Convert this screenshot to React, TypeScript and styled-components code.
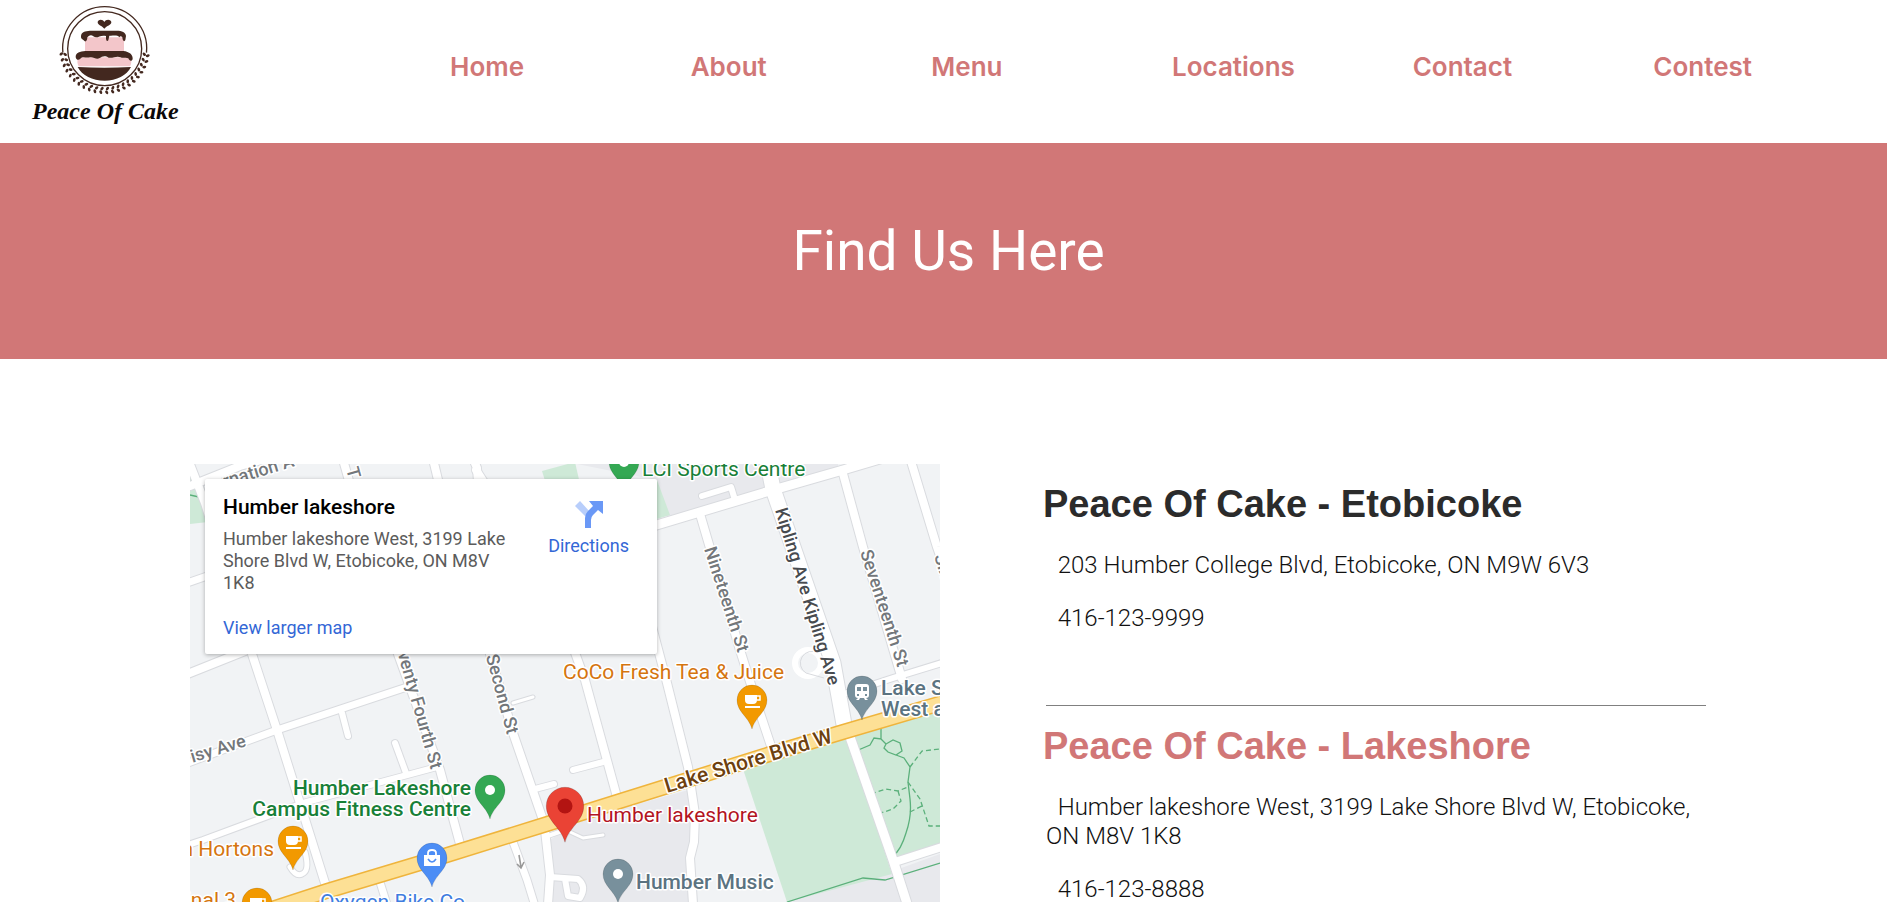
import React from 'react';
import styled, { createGlobalStyle } from 'styled-components';

const rose = '#d17777';

const GlobalStyle = createGlobalStyle`
  *, *::before, *::after { box-sizing: border-box; }
  body { margin: 0; background: #fff; font-family: Roboto, sans-serif; color: #222; }
`;

const Page = styled.div`
  height: 100vh;
  overflow-y: auto;
  scrollbar-width: none;
`;

const Header = styled.header`
  display: flex;
  align-items: center;
  height: 143px;
`;

const LogoLink = styled.a`
  flex: none;
  width: 220px;
  height: 143px;
  svg { display: block; }
`;

const Nav = styled.nav`
  flex: 1;
  display: grid;
  grid-template-columns: repeat(5, 1fr) auto;
  padding: 0 135px 10px 230px;
`;

const NavLink = styled.a`
  font: 600 26px/32px Inter, sans-serif;
  color: ${rose};
  text-decoration: none;
`;

const Banner = styled.section`
  display: flex;
  justify-content: center;
  align-items: center;
  height: 216px;
  padding-left: 10px;
  background: ${rose};
`;

const BannerTitle = styled.h1`
  margin: 0;
  font: 400 55px/68px Roboto, sans-serif;
  color: #fff;
`;

const Content = styled.main`
  display: grid;
  grid-template-columns: 75fr 66fr;
  column-gap: 106px;
  align-items: start;
  padding: 105px 181px 0 190px;
`;

const MapFrame = styled.section`
  position: relative;
  height: 450px;
  overflow: hidden;
  background: #f1f3f5;
`;

const MapSvg = styled.svg`
  display: block;
  width: 100%;
  height: 100%;
  font-family: Roboto, sans-serif;
`;

const InfoCard = styled.div`
  position: absolute;
  top: 15px;
  left: 15px;
  display: flex;
  justify-content: space-between;
  width: 452px;
  height: 175px;
  padding: 16px 28px 12px 18px;
  background: #fff;
  border-radius: 2px;
  box-shadow: 0 1px 4px rgba(0, 0, 0, 0.3);
`;

const Place = styled.div`
  display: flex;
  flex-direction: column;
  align-items: flex-start;
  width: 290px;
`;

const PlaceName = styled.h2`
  margin: 0 0 9px;
  font: 500 21px/24px Roboto, sans-serif;
  color: #000;
`;

const PlaceAddress = styled.p`
  margin: 0 0 23px;
  font-size: 18px;
  line-height: 22px;
  color: #5b5b5b;
`;

const MapLink = styled.a`
  font-size: 18px;
  line-height: 22px;
  color: #3367d6;
  text-decoration: none;
`;

const Directions = styled(MapLink)`
  display: flex;
  flex-direction: column;
  align-items: center;
  gap: 7px;
  padding-top: 5px;
`;

const Store = styled.section`
  & + & { border-top: 1px solid #808080; }
`;

const StoreName = styled.h2<{ $active?: boolean }>`
  margin: 0 0 25px -3px;
  padding-top: 18px;
  font: 700 38px/44px "Liberation Sans", Arial, sans-serif;
  color: ${(p) => (p.$active ? rose : '#2b2b2b')};
`;

const StoreLine = styled.p`
  margin: 0 0 24px;
  font-size: 24px;
  font-weight: 300;
  line-height: 29px;
  color: #111;
`;

const Stores = styled.div`
  display: flex;
  flex-direction: column;
`;

const FirstStore = styled.div`
  padding-bottom: 48px;
`;

const leafAngles = Array.from({ length: 22 }, (_, i) => 8 + i * 7.8);

function Logo() {
  const brown = '#43281f';
  return (
    <svg width="220" height="143" viewBox="0 0 660 429" role="img" aria-label="Peace Of Cake">
      <g fill="none" stroke={brown}>
        <path d="M188.6 158 A126 126 0 1 1 439.4 158" strokeWidth="4" />
        <circle cx="314" cy="146" r="111" strokeWidth="4" />
      </g>
      <g fill={brown}>
        {leafAngles.map((a) => (
          <g key={a} transform={`translate(314 146) rotate(${a})`}>
            <ellipse cx="120" cy="0" rx="6" ry="4" transform="rotate(40 120 0)" />
            <ellipse cx="131" cy="3" rx="6" ry="4" transform="rotate(-30 131 3)" />
          </g>
        ))}
      </g>
      <path d="M313 86 C306 78 293 75 293 67 C293 58 308 56 313 66 C318 56 334 58 334 67 C334 75 320 78 313 86Z" fill={brown} />
      <path d="M255 112 H372 V154 H255Z" fill="#f3c6ca" />
      <path d="M243 108 C244 96 255 93 270 92 H350 C366 92 377 97 378 108 L376 120 C374 126 368 125 367 112 C363 107 360 109 358 112 C352 104 340 108 328 107 L325 121 C321 126 317 122 318 108 C300 103 292 118 280 109 C272 101 265 109 262 112 C262 125 255 127 251 121 C245 117 242 114 243 108Z" fill={brown} />
      <path d="M234 172 H393 C395 184 394 192 390 199 H236 C232 192 231 184 234 172Z" fill="#f3c6ca" />
      <path d="M227 171 C227 158 240 154 256 153 H370 C388 155 399 164 398 177 C396 185 388 184 385 175 C377 170 369 176 362 172 C350 166 338 176 326 173 C315 165 306 169 299 174 C289 180 281 170 270 172 C258 175 248 168 241 176 C236 182 228 180 227 171Z" fill={brown} />
      <path d="M233 201 C286 204 341 204 393 201 C380 226 350 242 314 242 C277 242 246 226 233 201Z" fill={brown} />
      <text x="316" y="357" textAnchor="middle" fontFamily='"Liberation Serif", serif' fontSize="72" fontWeight="700" fontStyle="italic" fill="#0b0808">
        Peace Of Cake
      </text>
    </svg>
  );
}

const roads: { d: string; w: number }[] = [
  { d: 'M-4 -10 L15 39 L62 190 L87 266 L135 419', w: 8 },
  { d: 'M152 -8 L208 190 L250 306 L270 380', w: 8 },
  { d: 'M243 -5 L249 20', w: 8 },
  { d: 'M282 -8 L287 4 L300 190 L323 269 L353 356', w: 8 },
  { d: 'M295 20 L286 6', w: 8 },
  { d: 'M0 22 L50 2 L120 -18', w: 8 },
  { d: 'M0 118 L20 111', w: 7 },
  { d: 'M-5 211 L55 187', w: 8 },
  { d: 'M-5 300 L87 266 L217 223', w: 7 },
  { d: 'M152 249 L158 272', w: 6 },
  { d: 'M205 279 L216 309', w: 6 },
  { d: 'M-5 382 L13 376 L113 339 L247 303', w: 6 },
  { d: 'M100 403 Q106 413 112 410 Q120 407 115 388', w: 5 },
  { d: 'M189 415 L200 450', w: 7 },
  { d: 'M323 378 L337 416 L349 455', w: 7 },
  { d: 'M355 366 L360 411 L357 455', w: 8 },
  { d: 'M360 413 L388 415 Q397 422 390 434 L378 432 L375 415', w: 6 },
  { d: 'M345 325 L364 320', w: 6 },
  { d: 'M323 239 L343 233', w: 3 },
  { d: 'M355 373 L372 367', w: 4 },
  { d: 'M380 368 L393 374 L413 371', w: 3 },
  { d: 'M383 306 L417 297', w: 6 },
  { d: 'M380 175 L395 216 L427 333', w: 8 },
  { d: 'M460 155 L477 219 L498 303 L505 350 L504 378 L500 394 L504 455', w: 8 },
  { d: 'M460 63 L573 29 L653 6 L720 -14', w: 9 },
  { d: 'M512 32 L541 23 L545 36', w: 6 },
  { d: 'M510 50 L550 186 L570 249 L581 282', w: 8 },
  { d: 'M652 6 L673 83 L712 215', w: 8 },
  { d: 'M720 -6 L747 83 L760 120', w: 8 },
  { d: 'M654 230 L703 214 L755 198', w: 6 },
  { d: 'M577 -5 L583 25 L643 199 L655 266', w: 15 },
  { d: 'M660 273 L703 396 L722 455', w: 9 },
  { d: 'M705 398 L755 382', w: 8 },
];

const highway = 'M60 452 L137 427 L257 391 L357 360 L427 338 L580 290 L653 268 L755 238';

type PinProps = { x: number; y: number; color: string; scale?: number; children?: React.ReactNode };

function Pin({ x, y, color, scale = 1, children }: PinProps) {
  return (
    <g transform={`translate(${x} ${y}) scale(${scale})`}>
      <path d="M0 29 C-3 17 -15 12 -15 0 A15 15 0 0 1 15 0 C15 12 3 17 0 29Z" fill={color} stroke="rgba(0,0,0,0.2)" strokeWidth="0.6" />
      {children}
    </g>
  );
}

const Dot = () => <circle r="5" fill="#fff" />;

const Cup = () => (
  <g>
    <path d="M-7 -5 H5 V0 Q5 4 1 4 H-3 Q-7 4 -7 0Z M-7 6 H8 V8 H-7Z" fill="#fff" />
    <path d="M5 -4 H8 V0 H5" fill="none" stroke="#fff" strokeWidth="1.5" />
  </g>
);

const Label = styled.text<{ $strong?: boolean; $size?: number }>`
  font-size: ${(p) => p.$size ?? 21}px;
  font-weight: ${(p) => (p.$strong ? 500 : 400)};
  paint-order: stroke;
  stroke: #fff;
  stroke-width: 3px;
  stroke-linejoin: round;
`;

function MapDrawing() {
  const street = '#73777b';
  return (
    <MapSvg viewBox="0 0 750 450" preserveAspectRatio="xMidYMid slice" role="img" aria-label="Map of Humber lakeshore">
      <rect width="750" height="450" fill="#f1f3f5" />
      <g fill="#e8e9ed">
        <path d="M387 0 H648 V8 L478 55 L467 16Z" />
        <path d="M360 376 L390 356 L502 325 V385 L498 450 H360Z" />
        <path d="M596 437 L703 407 L750 390 V450 H600Z" />
      </g>
      <g fill="#cee9d7">
        <path d="M553 305 L657 272 L702 410 L597 438Z" />
        <path d="M663 268 L750 243 V380 L704 394Z" />
        <path d="M0 13 L18 58 L0 60Z" />
        <path d="M352 7 L385 -2 L390 20 H356Z" />
        <path d="M467 16 L480 51 L467 55Z" />
      </g>
      <g fill="none" stroke="#5bb07b" strokeWidth="1.3">
        <path d="M597 438 L673 414 L695 416 L750 399" />
        <path d="M666 287 L680 281 L684 274 L691 275 V262 M691 275 L696 280 M696 280 L703 276 L710 279 L712 287 L706 291 L698 288 L694 284Z M706 291 L714 294 L720 303 L718 318 L720 335 Q722 352 716 369 Q711 386 703 392" />
        <path d="M720 303 L732 287 L750 285 M681 330 L696 325 L708 327 L718 323 M708 327 L711 337 L703 345 L688 350 M718 318 L730 335 L739 362 L750 362 M720 348 L732 342" strokeDasharray="5 3" />
        <path d="M0 31 L9 33" />
      </g>
      <g fill="none">
        <circle cx="618" cy="199" r="13" stroke="#fff" strokeWidth="6" />
        <path d="M628 189 A10 10 0 1 0 616 209 L634 214" stroke="#d9dbdf" strokeWidth="1" />
      </g>
      <g fill="none" stroke="#d9dbdf" strokeLinecap="round" strokeLinejoin="round">
        {roads.map((r) => <path key={r.d} d={r.d} strokeWidth={r.w + 2} />)}
      </g>
      <g fill="none" stroke="#fff" strokeLinecap="round" strokeLinejoin="round">
        {roads.map((r) => <path key={r.d} d={r.d} strokeWidth={r.w} />)}
      </g>
      <g fill="none">
        <path d={highway} stroke="#efb43c" strokeWidth="16" />
        <path d={highway} stroke="#fde095" strokeWidth="13" />
      </g>
      <path d="M329 391 L331 403 M327 400 L331 404 L334 398" fill="none" stroke="#999" strokeWidth="1.6" />

      <Label $size={18} $strong fill={street} transform="translate(20 28) rotate(-17)">ternation A</Label>
      <Label $size={18} $strong fill={street} transform="translate(156 5) rotate(74)">T</Label>
      <Label $size={18} $strong fill={street} transform="translate(514 85) rotate(72)">Nineteenth St</Label>
      <Label $size={18} $strong fill="#484b4f" transform="translate(585 46) rotate(73)">Kipling Ave Kipling Ave</Label>
      <Label $size={18} $strong fill={street} transform="translate(670 88) rotate(72)">Seventeenth St</Label>
      <Label $size={18} $strong fill={street} transform="translate(744 92) rotate(72)">Six</Label>
      <Label $size={18} $strong fill={street} textAnchor="end" transform="translate(241 306) rotate(74)">Twenty Fourth St</Label>
      <Label $size={18} $strong fill={street} textAnchor="end" transform="translate(317 271) rotate(75)">Second St</Label>
      <Label $size={18} $strong fill={street} textAnchor="end" transform="translate(57 282) rotate(-17)">isy Ave</Label>
      <Label $strong fill="#6d400e" transform="translate(477 329) rotate(-17)">Lake Shore Blvd W</Label>

      <Label fill="#188038" x="452" y="12">LCI Sports Centre</Label>
      <Label fill="#d5750f" x="373" y="215">CoCo Fresh Tea &amp; Juice</Label>
      <Label $strong fill="#188038" x="281" y="331" textAnchor="end">Humber Lakeshore</Label>
      <Label $strong fill="#188038" x="281" y="352" textAnchor="end">Campus Fitness Centre</Label>
      <Label fill="#d5750f" x="84" y="392" textAnchor="end">n Hortons</Label>
      <Label fill="#d5750f" x="46" y="443" textAnchor="end">inal 3</Label>
      <Label fill="#3f7de0" x="130" y="445">Oxygen Bike Co</Label>
      <Label fill="#b31422" x="397" y="358">Humber lakeshore</Label>
      <Label $strong fill="#5b7381" x="446" y="425">Humber Music</Label>
      <Label $strong fill="#5b7381" x="691" y="231">Lake S</Label>
      <Label $strong fill="#5b7381" x="691" y="252">West a</Label>

      <Pin x={434} y={-2} color="#34a853"><Dot /></Pin>
      <Pin x={300} y={326} color="#34a853"><Dot /></Pin>
      <Pin x={103} y={377} color="#f29900"><Cup /></Pin>
      <Pin x={67} y={439} color="#f29900"><Cup /></Pin>
      <Pin x={562} y={236} color="#f29900"><Cup /></Pin>
      <Pin x={242} y={394} color="#4c8df5">
        <path d="M-8 -3 H8 V8 H-8Z" fill="#fff" />
        <path d="M-4 -3 V-5 Q-4 -8 0 -8 Q4 -8 4 -5 V-3" fill="none" stroke="#fff" strokeWidth="1.8" />
        <path d="M-4 1 Q0 7 4 1" fill="none" stroke="#4c8df5" strokeWidth="1.6" />
      </Pin>
      <Pin x={428} y={410} color="#78909c"><Dot /></Pin>
      <Pin x={672} y={227} color="#78909c">
        <path d="M-7 -4 Q-7 -7 -4 -7 H4 Q7 -7 7 -4 V4 Q7 7 4 7 L6 9 H-6 L-4 7 Q-7 7 -7 4Z" fill="#fff" />
        <path d="M-5 -4 H-1 V0 H-5Z M1 -4 H5 V0 H1Z M-5 3 H-3 V5 H-5Z M3 3 H5 V5 H3Z M-3 9 L-2 7 H2 L3 9Z" fill="#78909c" />
      </Pin>
      <Pin x={375} y={342} color="#ea4335" scale={1.25}><circle r="6" fill="#b31412" /></Pin>
    </MapSvg>
  );
}

function DirectionsIcon() {
  return (
    <svg width="28" height="28" viewBox="0 0 28 28" aria-hidden="true">
      <path d="M5 1 L0 6 L11 17 L15 12Z" fill="#b8cefb" />
      <path d="M10 28 V18 Q10 14 13 11 L18 6 L14 1 H28 V14 L23 10 L18 15 Q16 17 16 20 V28Z" fill="#6a98f6" />
    </svg>
  );
}

const links = ['Home', 'About', 'Menu', 'Locations', 'Contact', 'Contest'];

export default function App() {
  return (
    <Page>
      <GlobalStyle />
      <Header>
        <LogoLink href="#"><Logo /></LogoLink>
        <Nav>
          {links.map((l) => <NavLink key={l} href={`#${l.toLowerCase()}`}>{l}</NavLink>)}
        </Nav>
      </Header>
      <Banner>
        <BannerTitle>Find Us Here</BannerTitle>
      </Banner>
      <Content>
        <MapFrame>
          <MapDrawing />
          <InfoCard>
            <Place>
              <PlaceName>Humber lakeshore</PlaceName>
              <PlaceAddress>Humber lakeshore West, 3199 Lake Shore Blvd W, Etobicoke, ON M8V 1K8</PlaceAddress>
              <MapLink href="#map">View larger map</MapLink>
            </Place>
            <Directions href="#directions">
              <DirectionsIcon />
              Directions
            </Directions>
          </InfoCard>
        </MapFrame>
        <Stores>
          <Store>
            <FirstStore>
              <StoreName>Peace Of Cake - Etobicoke</StoreName>
              <StoreLine>&nbsp; 203 Humber College Blvd, Etobicoke, ON M9W 6V3</StoreLine>
              <StoreLine>&nbsp; 416-123-9999</StoreLine>
            </FirstStore>
          </Store>
          <Store>
            <StoreName $active>Peace Of Cake - Lakeshore</StoreName>
            <StoreLine>&nbsp; Humber lakeshore West, 3199 Lake Shore Blvd W, Etobicoke, ON M8V 1K8</StoreLine>
            <StoreLine>&nbsp; 416-123-8888</StoreLine>
          </Store>
        </Stores>
      </Content>
    </Page>
  );
}
